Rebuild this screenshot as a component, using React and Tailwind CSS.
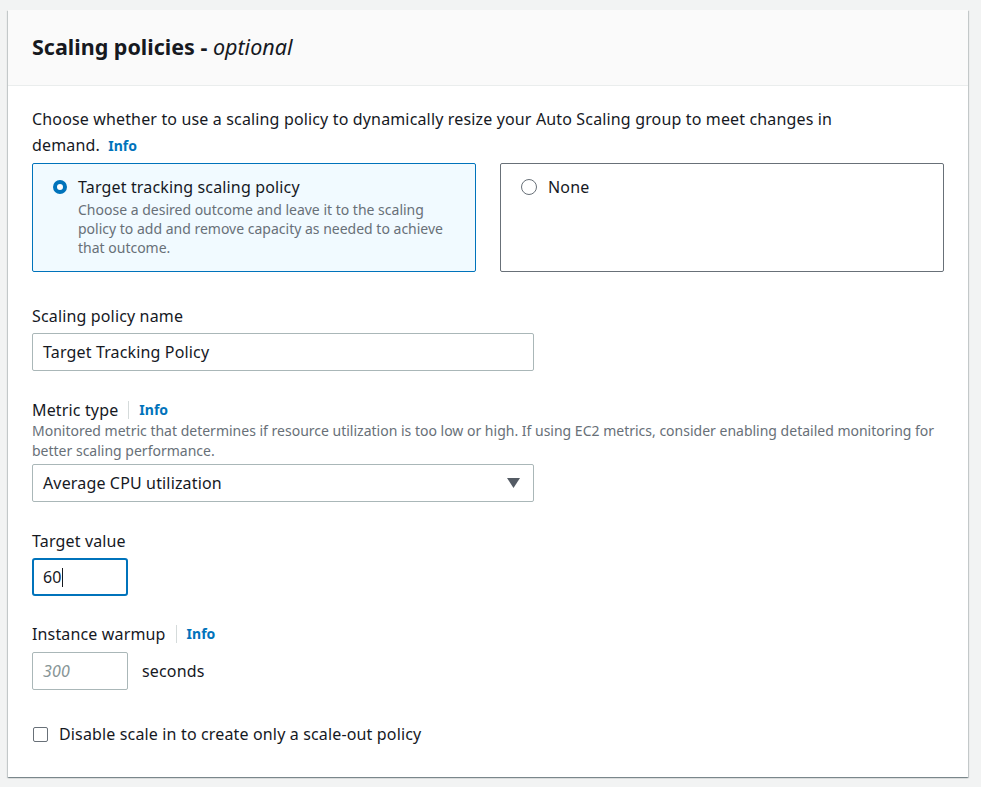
import React from 'react';

const font = { fontFamily: '"Noto Sans", "Open Sans", sans-serif' };

function Info() {
  return <span className="inline-block text-sm leading-[18px] font-bold tracking-normal text-[#0073bb]">Info</span>;
}

function LabelWithInfo({ children }) {
  return (
    <div className="flex items-center leading-[22px]">
      <span>{children}</span>
      <span className="mx-[10px] h-[18px] w-px bg-[#d5dbdb]" />
      <Info />
    </div>
  );
}

export default function App() {
  return (
    <div className="min-h-[787px] bg-[#f2f3f3] pt-[10px] pl-[8px] tracking-[0.15px] text-[#16191f]" style={font}>
      <div className="w-[960px] bg-white shadow-[0_1px_1px_0_rgba(0,28,36,0.3),1px_1px_1px_0_rgba(0,28,36,0.15),-1px_1px_1px_0_rgba(0,28,36,0.15)]">
        {/* header */}
        <div className="flex h-[76px] items-center border-b border-[#eaeded] bg-[#fafafa] px-6">
          <h2 className="text-[21.5px] font-bold tracking-normal">
            Scaling policies - <i className="font-normal">optional</i>
          </h2>
        </div>

        <div className="px-6 pt-5 pb-[32px]">
          <p className="max-w-[840px] leading-[26px]">
            Choose whether to use a scaling policy to dynamically resize your Auto Scaling group to meet changes in
            demand. <span className="ml-1"><Info /></span>
          </p>

          {/* policy tiles */}
          <div className="mt-[5px] grid grid-cols-[444px_444px] gap-[24px]">
            <div className="h-[109px] rounded-[2px] border border-[#0073bb] bg-[#f1faff] pt-[12px] pl-[20px] pr-5">
              <div className="flex items-start gap-[11px]">
                <span className="mt-[4px] h-[14px] w-[14px] shrink-0 rounded-full border-[4px] border-[#0073bb] bg-white" />
                <div>
                  <div className="leading-[22px]">Target tracking scaling policy</div>
                  <div className="mt-[2px] text-sm leading-[19px] tracking-normal text-[#687078]">
                    Choose a desired outcome and leave it to the scaling policy to add and remove capacity as needed to
                    achieve that outcome.
                  </div>
                </div>
              </div>
            </div>
            <div className="h-[109px] rounded-[2px] border border-[#687078] pt-[12px] pl-[20px]">
              <div className="flex items-start gap-[11px]">
                <span className="mt-[3px] h-[16px] w-[16px] shrink-0 rounded-full border border-[#687078] bg-white" />
                <div className="leading-[22px]">None</div>
              </div>
            </div>
          </div>

          {/* name */}
          <div className="mt-[33px] leading-[22px]">Scaling policy name</div>
          <div className="mt-[6px] flex h-[38px] w-[502px] items-center rounded-[2px] border border-[#aab7b8] px-[10px]">
            Target Tracking Policy
          </div>

          {/* metric type */}
          <div className="mt-[28px]">
            <LabelWithInfo>Metric type</LabelWithInfo>
          </div>
          <p className="text-sm leading-[20px] tracking-normal text-[#687078]">
            Monitored metric that determines if resource utilization is too low or high. If using EC2 metrics, consider
            enabling detailed monitoring for better scaling performance.
          </p>
          <div className="mt-[3px] flex h-[38px] w-[502px] items-center justify-between rounded-[2px] border border-[#aab7b8] pl-[10px] pr-[13px]">
            <span>Average CPU utilization</span>
            <svg width="13" height="10" viewBox="0 0 13 10">
              <path d="M0 0 H13 L6.5 10 Z" fill="#545b64" />
            </svg>
          </div>

          {/* target value */}
          <div className="mt-[28px] leading-[22px]">Target value</div>
          <div className="mt-[6px] flex h-[38px] w-[96px] items-center rounded-[3px] border-2 border-[#0073bb] px-[9px]">
            <span>60</span>
            <span className="h-[19px] w-px bg-[#16191f]" />
          </div>

          {/* warmup */}
          <div className="mt-[27px]">
            <LabelWithInfo>Instance warmup</LabelWithInfo>
          </div>
          <div className="mt-[7px] flex items-center gap-[14px]">
            <div className="flex h-[38px] w-[96px] items-center rounded-[2px] border border-[#aab7b8] px-[10px] italic text-[#879596]">
              300
            </div>
            <span>seconds</span>
          </div>

          {/* checkbox */}
          <div className="mt-[33px] flex items-center gap-[11px] leading-[22px]">
            <span className="ml-px h-[15px] w-[15px] rounded-[2px] border border-[#687078] bg-white" />
            <span>Disable scale in to create only a scale-out policy</span>
          </div>
        </div>
      </div>
    </div>
  );
}
